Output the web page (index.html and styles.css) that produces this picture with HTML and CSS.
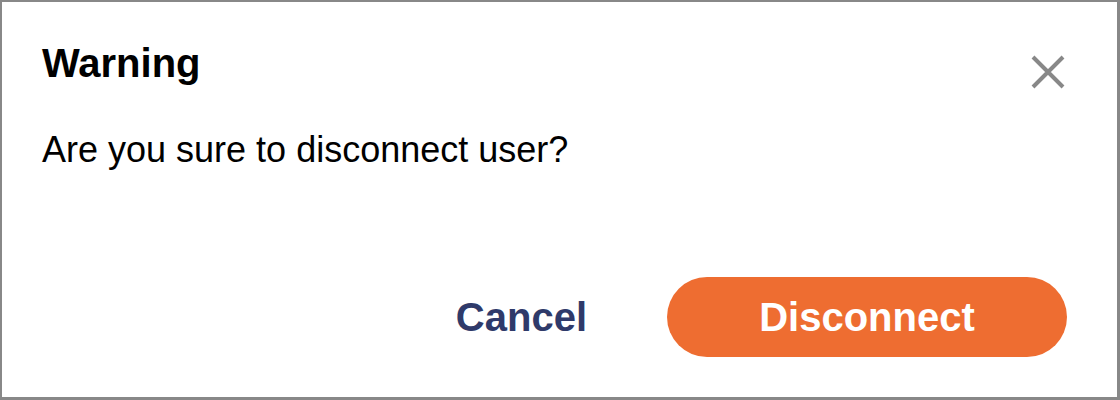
FILE: index.html
```html
<!DOCTYPE html>
<html lang="en">
<head>
<meta charset="utf-8">
<title>Warning</title>
<link rel="stylesheet" href="styles.css">
</head>
<body>
<div class="dialog">
  <div class="dialog-header">
    <h1 class="dialog-title">Warning</h1>
    <button class="close-btn" aria-label="Close">
      <svg viewBox="0 0 34 34" width="34" height="34">
        <path d="M2 2 L32 32 M32 2 L2 32" stroke="#888888" stroke-width="4" fill="none"/>
      </svg>
    </button>
  </div>
  <p class="dialog-message">Are you sure to disconnect user?</p>
  <div class="dialog-footer">
    <button class="btn-cancel">Cancel</button>
    <button class="btn-primary">Disconnect</button>
  </div>
</div>
</body>
</html>
```
FILE: styles.css
```css
html, body {
  margin: 0;
  padding: 0;
  height: 400px;
  background: #ffffff;
}
.dialog {
  box-sizing: border-box;
  height: 400px;
  width: 1120px;
  border: 2px solid #888888;
  border-right-width: 3px;
  border-bottom-width: 3px;
  padding: 37px 50px 40px 40px;
  display: flex;
  flex-direction: column;
  font-family: "Liberation Sans", Arial, sans-serif;
  color: #000000;
}
.dialog-header {
  display: flex;
  justify-content: space-between;
  align-items: flex-start;
}
.dialog-title {
  margin: 0;
  font-size: 40px;
  line-height: 48px;
  font-weight: 700;
}
.close-btn {
  margin: 16px 2px 0 0;
  padding: 0;
  border: 0;
  background: none;
  width: 34px;
  height: 34px;
  display: block;
}
.close-btn svg {
  display: block;
}
.dialog-message {
  margin: 40px 0 0 0;
  font-size: 36px;
  line-height: 42px;
}
.dialog-footer {
  margin-top: auto;
  display: flex;
  justify-content: flex-end;
  align-items: center;
  gap: 80px;
}
.btn-cancel {
  font-family: "Liberation Sans", Arial, sans-serif;
  font-size: 40px;
  font-weight: 700;
  color: #2f3a6a;
  background: none;
  border: 0;
  padding: 0;
}
.btn-primary {
  font-family: "Liberation Sans", Arial, sans-serif;
  font-size: 40px;
  font-weight: 700;
  color: #ffffff;
  background: #ee6d31;
  border: 0;
  border-radius: 40px;
  width: 400px;
  height: 80px;
  padding: 0;
}
```
